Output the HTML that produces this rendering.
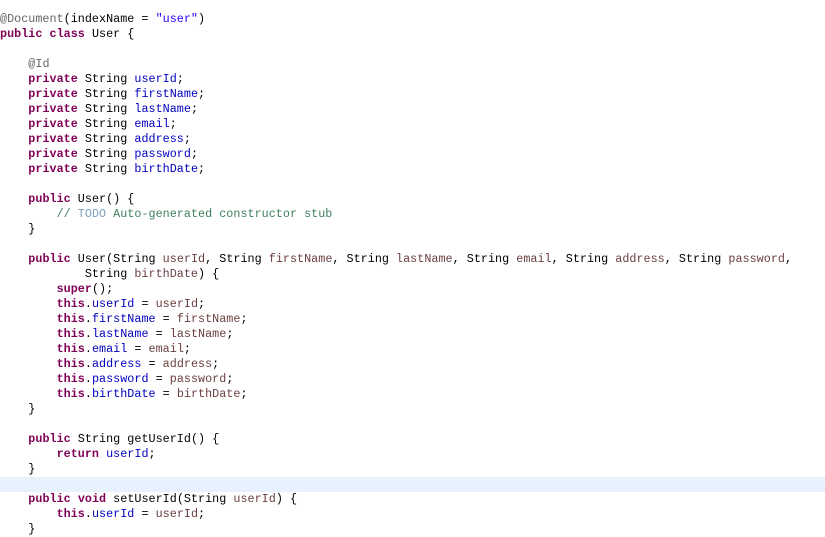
<!DOCTYPE html>
<html><head><style>
html,body{margin:0;padding:0;background:#fff;width:825px;height:537px;overflow:hidden}
pre{position:absolute;left:0;top:12px;margin:0;font-family:"Liberation Mono",monospace;font-size:11.75px;letter-spacing:0.02px;line-height:15px;color:#000}
.hl{position:absolute;left:0;top:477px;width:825px;height:15px;background:#e8f2fe}
.k{color:#7f0055;font-weight:bold}.f{color:#0000c0}.p{color:#6a3e3e}.a{color:#646464}.s{color:#2a00ff}.c{color:#3f7f5f}.t{color:#7f9fbf}
</style></head><body>
<div class="hl"></div>
<pre><span class="a">@Document</span>(indexName = <span class="s">"user"</span>)
<span class="k">public</span> <span class="k">class</span> User {

    <span class="a">@Id</span>
    <span class="k">private</span> String <span class="f">userId</span>;
    <span class="k">private</span> String <span class="f">firstName</span>;
    <span class="k">private</span> String <span class="f">lastName</span>;
    <span class="k">private</span> String <span class="f">email</span>;
    <span class="k">private</span> String <span class="f">address</span>;
    <span class="k">private</span> String <span class="f">password</span>;
    <span class="k">private</span> String <span class="f">birthDate</span>;

    <span class="k">public</span> User() {
        <span class="c">// </span><span class="t">TODO</span><span class="c"> Auto-generated constructor stub</span>
    }

    <span class="k">public</span> User(String <span class="p">userId</span>, String <span class="p">firstName</span>, String <span class="p">lastName</span>, String <span class="p">email</span>, String <span class="p">address</span>, String <span class="p">password</span>,
            String <span class="p">birthDate</span>) {
        <span class="k">super</span>();
        <span class="k">this</span>.<span class="f">userId</span> = <span class="p">userId</span>;
        <span class="k">this</span>.<span class="f">firstName</span> = <span class="p">firstName</span>;
        <span class="k">this</span>.<span class="f">lastName</span> = <span class="p">lastName</span>;
        <span class="k">this</span>.<span class="f">email</span> = <span class="p">email</span>;
        <span class="k">this</span>.<span class="f">address</span> = <span class="p">address</span>;
        <span class="k">this</span>.<span class="f">password</span> = <span class="p">password</span>;
        <span class="k">this</span>.<span class="f">birthDate</span> = <span class="p">birthDate</span>;
    }

    <span class="k">public</span> String getUserId() {
        <span class="k">return</span> <span class="f">userId</span>;
    }

    <span class="k">public</span> <span class="k">void</span> setUserId(String <span class="p">userId</span>) {
        <span class="k">this</span>.<span class="f">userId</span> = <span class="p">userId</span>;
    }
</pre>
</body></html>
